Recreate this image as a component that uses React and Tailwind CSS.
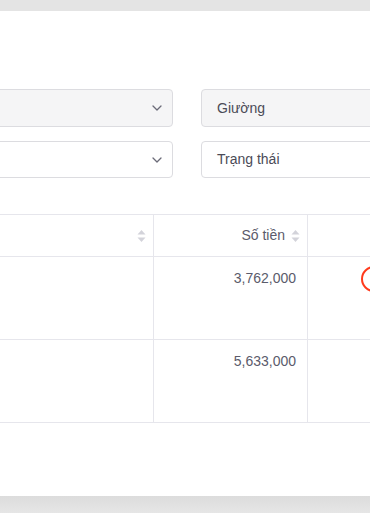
import React from 'react';

function Chevron() {
  return (
    <svg width="10" height="6" viewBox="0 0 10 6" fill="none" className="shrink-0">
      <path d="M1 1l4 4 4-4" stroke="#6b6b78" strokeWidth="1.3" strokeLinecap="round" strokeLinejoin="round" />
    </svg>
  );
}

function SortIcon() {
  return (
    <svg width="9" height="14" viewBox="0 0 9 14" className="shrink-0">
      <path d="M4.5 1L8.5 5.5H0.5Z" fill="#d3d3da" />
      <path d="M4.5 13L8.5 8.5H0.5Z" fill="#d3d3da" />
    </svg>
  );
}

export default function App() {
  const rows = [
    { amount: '3,762,000', flag: true },
    { amount: '5,633,000', flag: false },
  ];

  return (
    <div
      className="w-[370px] h-[513px] overflow-hidden flex flex-col bg-[#e4e4e4] text-[14px] text-[#5b5b6b]"
      style={{ fontFamily: '"Liberation Sans", Arial, sans-serif' }}
    >
      <div className="h-[11px] shrink-0 bg-[#e4e4e4]" />

      <main className="h-[485px] shrink-0 bg-white flex flex-col overflow-hidden">
        {/* Filters */}
        <div className="mt-[78px] flex flex-col gap-[14px]">
          <div className="flex gap-[28px]">
            <div className="-ml-[20px] w-[193px] h-[38px] shrink-0 rounded-[4px] border border-[#dcdce0] bg-[#f5f5f6] flex items-center justify-end pr-[10px]">
              <Chevron />
            </div>
            <div className="w-[200px] h-[38px] shrink-0 rounded-[4px] border border-[#dcdce0] bg-[#f5f5f6] flex items-center pl-[15px] text-[#4b4b57]">
              Giường
            </div>
          </div>
          <div className="flex gap-[28px]">
            <div className="-ml-[20px] w-[193px] h-[37px] shrink-0 rounded-[4px] border border-[#dcdce0] bg-white flex items-center justify-end pr-[10px]">
              <Chevron />
            </div>
            <div className="w-[200px] h-[37px] shrink-0 rounded-[4px] border border-[#dcdce0] bg-white flex items-center pl-[15px] text-[#4b4b57]">
              Trạng thái
            </div>
          </div>
        </div>

        {/* Table */}
        <div className="mt-[36px] border-t border-[#e6e6ec]">
          <div className="flex h-[42px] border-b border-[#e6e6ec]">
            <div className="w-[154px] shrink-0 border-r border-[#e6e6ec] flex items-center justify-end pr-[7px]">
              <SortIcon />
            </div>
            <div className="w-[154px] shrink-0 border-r border-[#e6e6ec] flex items-center justify-end gap-[6px] pr-[7px]">
              <span>Số tiền</span>
              <SortIcon />
            </div>
            <div className="flex-1" />
          </div>

          {rows.map((r) => (
            <div key={r.amount} className="flex h-[83px] border-b border-[#e6e6ec]">
              <div className="w-[154px] shrink-0 border-r border-[#e6e6ec]" />
              <div className="w-[154px] shrink-0 border-r border-[#e6e6ec] pt-[11px] pr-[11px] text-right leading-[20px]">
                {r.amount}
              </div>
              <div className="flex-1 pt-[9px] pl-[53px] overflow-hidden">
                {r.flag && (
                  <div className="w-[26px] h-[26px] rounded-full border-2 border-[#ff3a1c]" />
                )}
              </div>
            </div>
          ))}
        </div>
      </main>

      <div className="flex-1 bg-gradient-to-b from-[#dcdcdc] to-[#e6e6e6]" />
    </div>
  );
}
